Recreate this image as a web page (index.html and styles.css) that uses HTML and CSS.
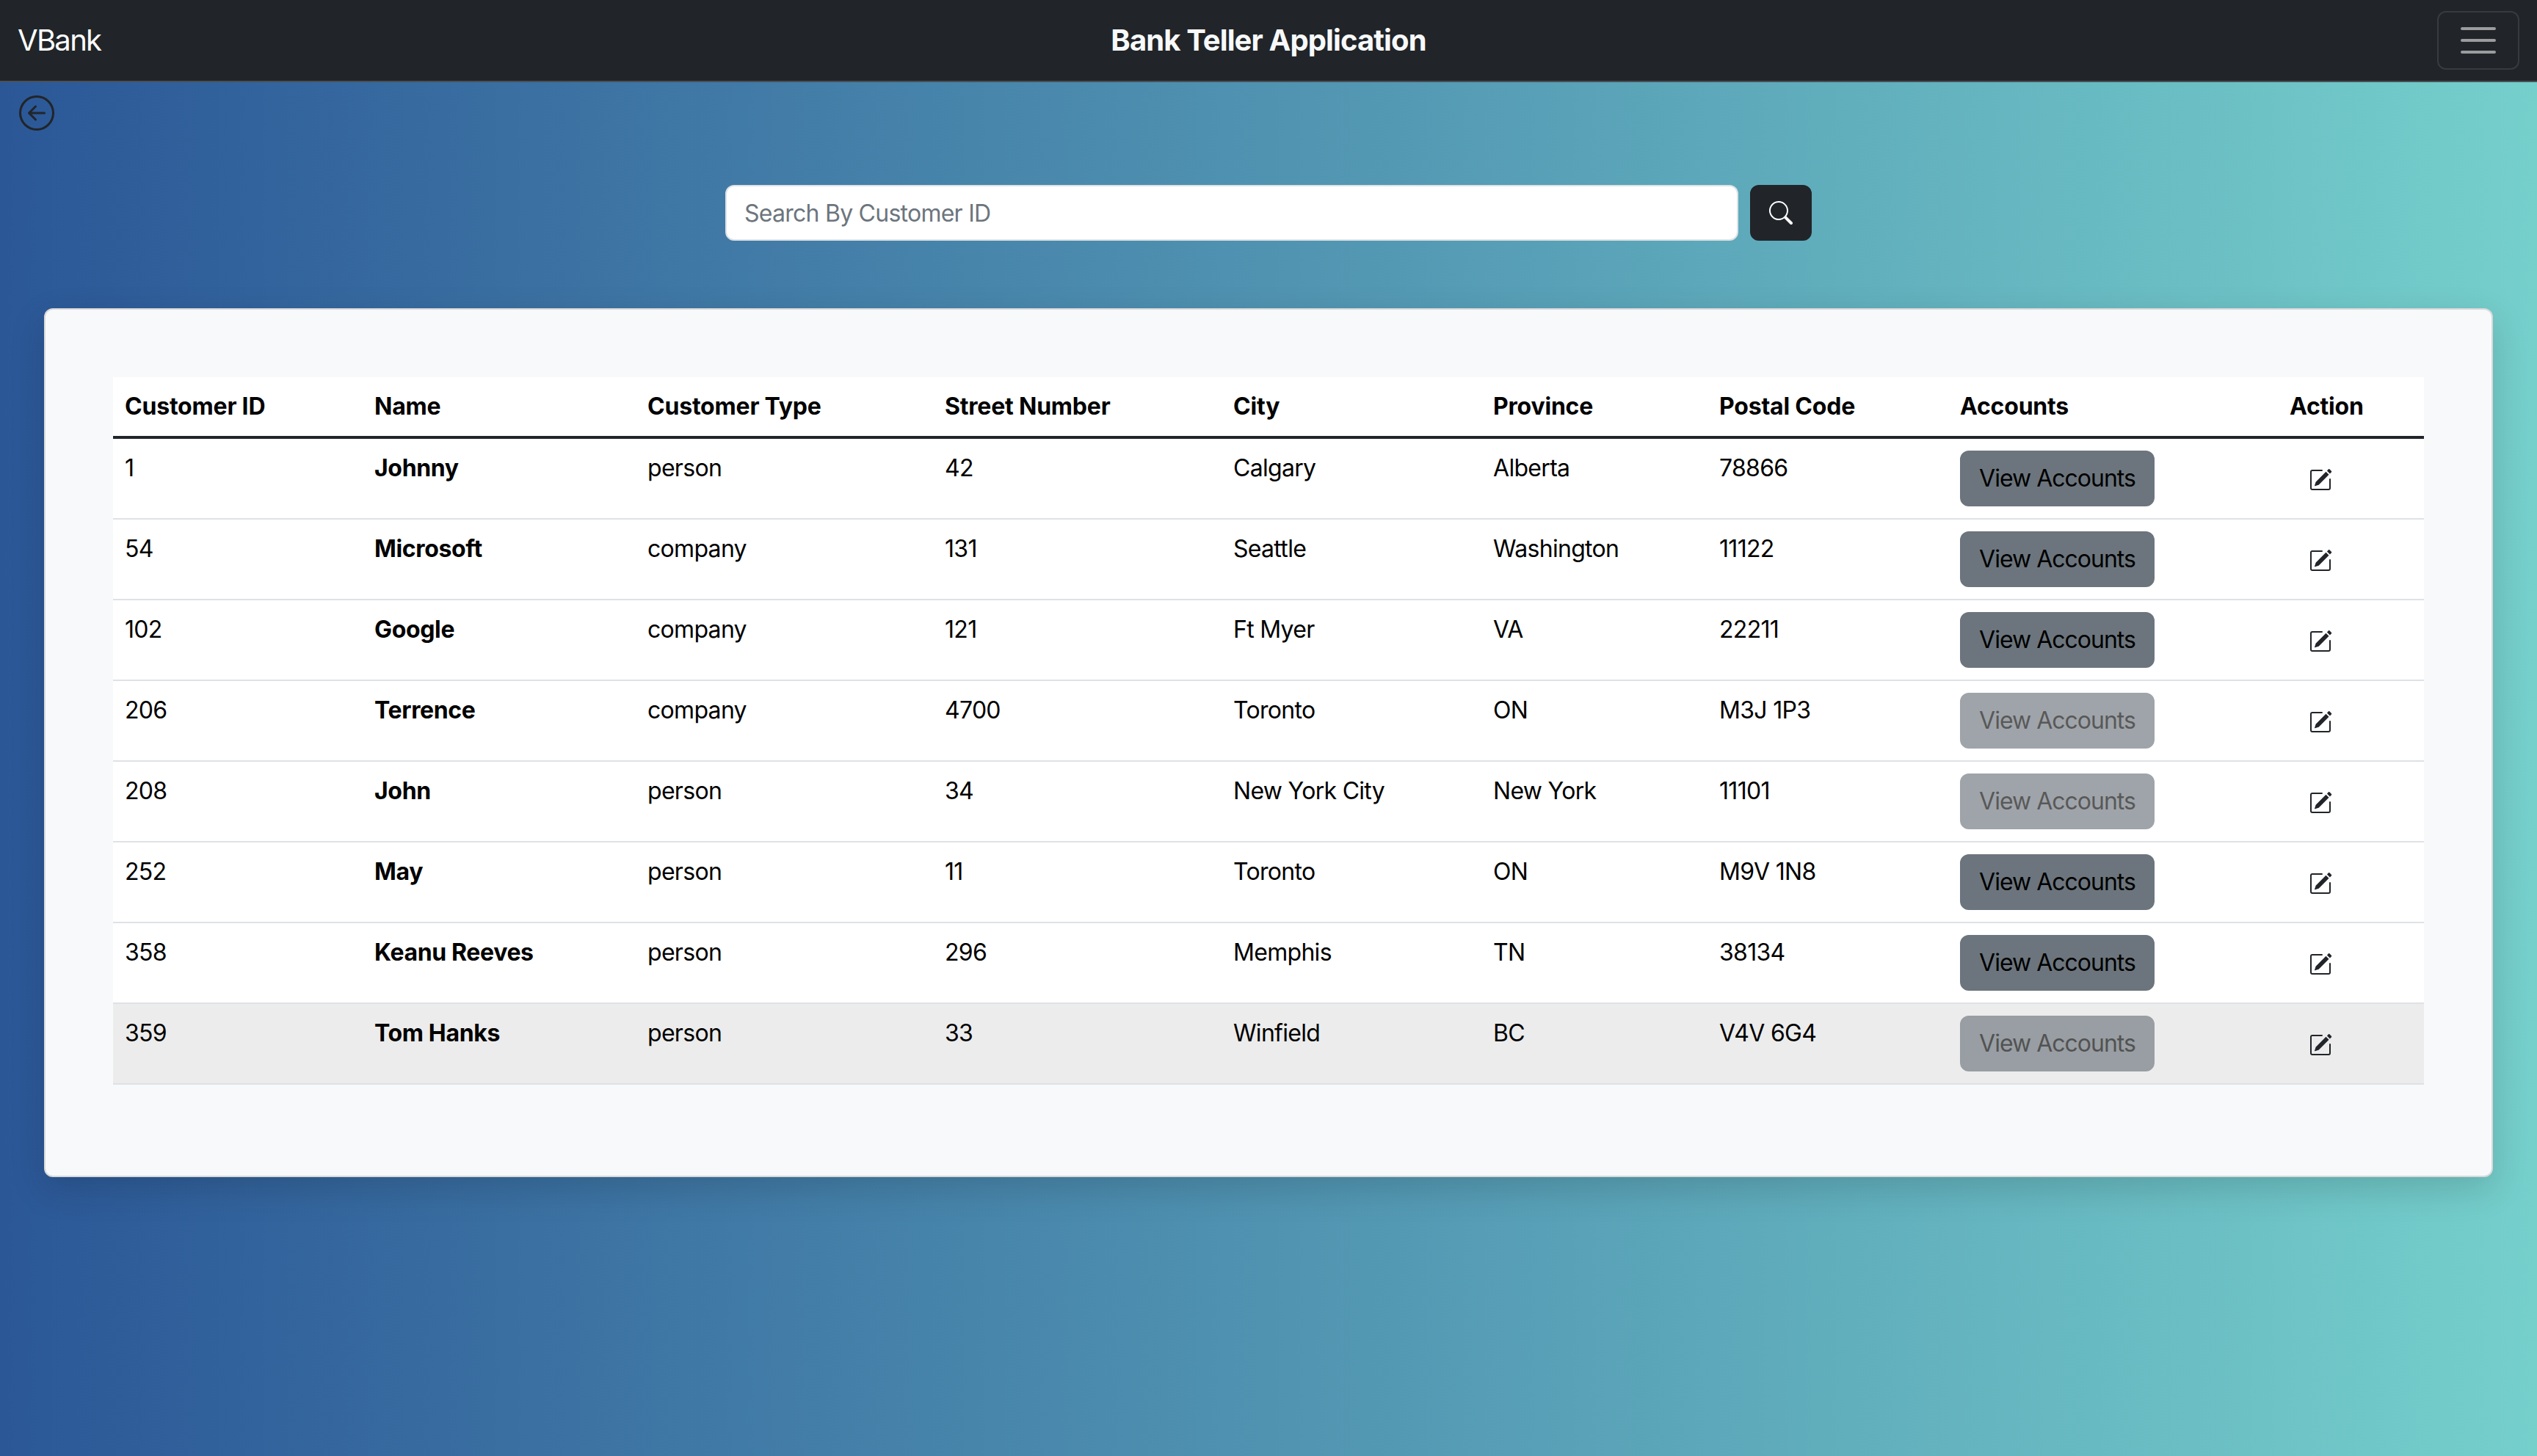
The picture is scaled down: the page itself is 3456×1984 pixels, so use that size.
FILE: index.html
```html
<!DOCTYPE html>
<html lang="en">

<head>
    <meta charset="UTF-8">
    <meta name="viewport" content="width=device-width, initial-scale=1.0">
    <title>Bank Teller Application</title>
    <link rel="stylesheet" href="styles.css">
</head>

<body>

    <nav class="navbar">
        <a class="brand" href="#">VBank</a>
        <span class="nav-title">Bank Teller Application</span>
        <button type="button" class="toggler" aria-label="Toggle navigation">
            <svg class="toggler-icon" viewBox="0 0 30 30">
                <path d="M4 7h22M4 15h22M4 23h22" />
            </svg>
        </button>
    </nav>

    <a class="back-link" href="#" aria-label="Back">
        <svg class="back-icon" viewBox="0 0 16 16">
            <path fill-rule="evenodd" d="M1 8a7 7 0 1 0 14 0A7 7 0 0 0 1 8zm15 0A8 8 0 1 1 0 8a8 8 0 0 1 16 0zm-4.5-.5a.5.5 0 0 1 0 1H5.707l2.147 2.146a.5.5 0 0 1-.708.708l-3-3a.5.5 0 0 1 0-.708l3-3a.5.5 0 1 1 .708.708L5.707 7.5H11.5z" />
        </svg>
    </a>

    <form class="search-form">
        <input class="search-input" type="text" placeholder="Search By Customer ID">
        <button type="button" class="search-btn" aria-label="Search">
            <svg class="icon" viewBox="0 0 16 16">
                <path d="M11.742 10.344a6.5 6.5 0 1 0-1.397 1.398h-.001c.03.04.062.078.098.115l3.85 3.85a1 1 0 0 0 1.415-1.414l-3.85-3.85a1.007 1.007 0 0 0-.115-.1zM12 6.5a5.5 5.5 0 1 1-11 0 5.5 5.5 0 0 1 11 0z" />
            </svg>
        </button>
    </form>

    <div class="card">
        <table class="customers">
            <colgroup>
                <col class="col-id">
                <col class="col-name">
                <col class="col-type">
                <col class="col-street">
                <col class="col-city">
                <col class="col-province">
                <col class="col-postal">
                <col class="col-accounts">
                <col class="col-action">
            </colgroup>
            <thead>
                <tr>
                    <th>Customer ID</th>
                    <th>Name</th>
                    <th>Customer Type</th>
                    <th>Street Number</th>
                    <th>City</th>
                    <th>Province</th>
                    <th>Postal Code</th>
                    <th>Accounts</th>
                    <th>Action</th>
                </tr>
            </thead>
            <tbody id="rows"></tbody>
        </table>
    </div>

    <script>
        var customers = [
            [1, 'Johnny', 'person', '42', 'Calgary', 'Alberta', '78866', true],
            [54, 'Microsoft', 'company', '131', 'Seattle', 'Washington', '11122', true],
            [102, 'Google', 'company', '121', 'Ft Myer', 'VA', '22211', true],
            [206, 'Terrence', 'company', '4700', 'Toronto', 'ON', 'M3J 1P3', false],
            [208, 'John', 'person', '34', 'New York City', 'New York', '11101', false],
            [252, 'May', 'person', '11', 'Toronto', 'ON', 'M9V 1N8', true],
            [358, 'Keanu Reeves', 'person', '296', 'Memphis', 'TN', '38134', true],
            [359, 'Tom Hanks', 'person', '33', 'Winfield', 'BC', 'V4V 6G4', false]
        ];

        var editIcon = '<svg class="icon" viewBox="0 0 16 16">' +
            '<path d="M15.502 1.94a.5.5 0 0 1 0 .706L14.459 3.69l-2-2L13.502.646a.5.5 0 0 1 .707 0l1.293 1.293zm-1.75 2.456-2-2L4.939 9.21a.5.5 0 0 0-.121.196l-.805 2.414a.25.25 0 0 0 .316.316l2.414-.805a.5.5 0 0 0 .196-.12l6.813-6.814z"/>' +
            '<path fill-rule="evenodd" d="M1 13.5A1.5 1.5 0 0 0 2.5 15h11a1.5 1.5 0 0 0 1.5-1.5v-6a.5.5 0 0 0-1 0v6a.5.5 0 0 1-.5.5h-11a.5.5 0 0 1-.5-.5v-11a.5.5 0 0 1 .5-.5H9a.5.5 0 0 0 0-1H2.5A1.5 1.5 0 0 0 1 2.5v11z"/>' +
            '</svg>';

        var html = '';
        customers.forEach(function (c, i) {
            html += '<tr' + (i === customers.length - 1 ? ' class="hovered"' : '') + '>';
            html += '<td>' + c[0] + '</td>';
            html += '<td class="name">' + c[1] + '</td>';
            for (var j = 2; j < 7; j++) {
                html += '<td>' + c[j] + '</td>';
            }
            html += '<td><button type="button" class="view-btn"' + (c[7] ? '' : ' disabled') + '>View Accounts</button></td>';
            html += '<td><button type="button" class="edit-btn" aria-label="Edit">' + editIcon + '</button></td>';
            html += '</tr>';
        });
        document.getElementById('rows').innerHTML = html;
    </script>
</body>

</html>
```

FILE: styles.css
```css
* {
    box-sizing: border-box;
}

body {
    font-family: Inter, "Liberation Sans", sans-serif;
    font-size: 32px;
    line-height: 48px;
    margin: 0;
    min-height: 100vh;
    color: #000;
    background: linear-gradient(to right, #2b5797, #75cfcb);
}

.navbar {
    display: grid;
    grid-template-columns: 1fr auto 1fr;
    align-items: center;
    height: 112px;
    padding: 0 24px;
    background-color: #212529;
    border-bottom: 2px solid #495057;
}

.brand {
    font-size: 40px;
    letter-spacing: -1.7px;
    color: #fff;
    text-decoration: none;
}

.nav-title {
    font-size: 40px;
    font-weight: 700;
    letter-spacing: -0.9px;
    color: #f8f9fa;
}

.toggler {
    justify-self: end;
    display: flex;
    align-items: center;
    justify-content: center;
    width: 112px;
    height: 80px;
    padding: 0;
    background: none;
    border: 2px solid rgba(255, 255, 255, 0.1);
    border-radius: 12px;
}

.toggler-icon {
    width: 60px;
    height: 60px;
    fill: none;
    stroke: rgba(255, 255, 255, 0.55);
    stroke-width: 2;
    stroke-linecap: round;
}

.back-link {
    display: block;
    width: 48px;
    height: 48px;
    margin: 18px 0 0 26px;
}

.back-icon {
    display: block;
    width: 48px;
    height: 48px;
    fill: #212529;
}

.icon {
    width: 32px;
    height: 32px;
    fill: currentColor;
    vertical-align: -4px;
}

.search-form {
    display: flex;
    justify-content: center;
    gap: 16px;
    margin-top: 74px;
}

.search-input {
    width: 1380px;
    height: 76px;
    padding: 12px 24px;
    font: inherit;
    letter-spacing: -0.75px;
    color: #212529;
    background-color: #fff;
    border: 2px solid #dee2e6;
    border-radius: 12px;
}

.search-input::placeholder {
    color: #6c757d;
}

.search-btn {
    width: 84px;
    height: 76px;
    padding: 0;
    color: #fff;
    background-color: #212529;
    border: 2px solid #212529;
    border-radius: 12px;
}

.card {
    margin: 92px 60px 0;
    padding: 92px 92px 124px;
    background-color: #f8f9fa;
    border: 2px solid rgba(0, 0, 0, 0.125);
    border-radius: 12px;
    box-shadow: 0 16px 48px rgba(0, 0, 0, 0.15);
}

.customers {
    width: 100%;
    table-layout: fixed;
    border-collapse: separate;
    border-spacing: 0;
    background-color: #fff;
    letter-spacing: -0.7px;
}

.col-id { width: 340px; }
.col-name { width: 372px; }
.col-type { width: 405px; }
.col-street { width: 393px; }
.col-city { width: 354px; }
.col-province { width: 308px; }
.col-postal { width: 328px; }
.col-accounts { width: 449px; }
.col-action { width: 199px; }

.customers th,
.customers td {
    padding: 16px;
    text-align: left;
    vertical-align: top;
    border-bottom: 2px solid #dee2e6;
}

.customers th {
    font-weight: 700;
    letter-spacing: -0.2px;
    vertical-align: bottom;
    border-bottom: 4px solid #212529;
}

.customers td.name {
    font-weight: 700;
    letter-spacing: -0.35px;
}

.hovered td {
    background-color: #ececec;
}

.view-btn {
    display: block;
    width: 265px;
    height: 76px;
    padding: 12px 0;
    font: inherit;
    letter-spacing: -1px;
    color: #000;
    background-color: #6c757d;
    border: 2px solid #6c757d;
    border-radius: 12px;
}

.view-btn:disabled {
    opacity: 0.65;
}

.edit-btn {
    display: block;
    height: 76px;
    padding: 15px 24px 9px;
    font: inherit;
    color: #212529;
    background: none;
    border: 2px solid transparent;
    border-radius: 12px;
}
```
